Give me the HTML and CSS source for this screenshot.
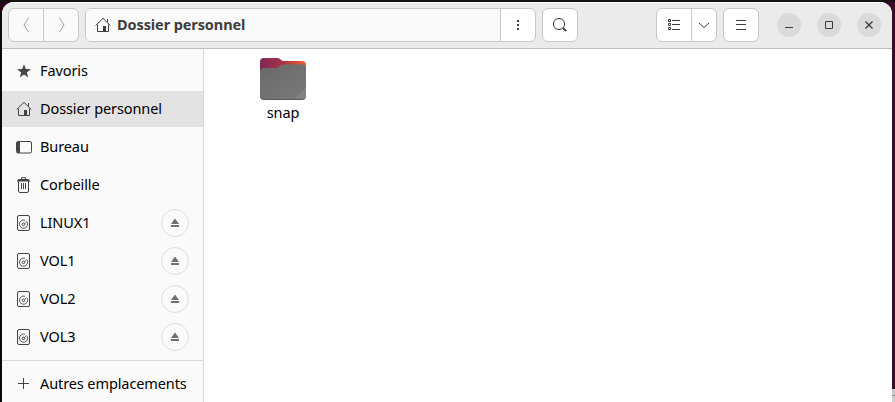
FILE: index.html
```html
<!DOCTYPE html>
<html lang="fr">
<head>
<meta charset="utf-8">
<title>Dossier personnel</title>
<link rel="stylesheet" href="styles.css">
</head>
<body>
<svg class="defs" width="0" height="0">
  <symbol id="home" viewBox="0 0 16 16"><path d="M.6 8.600 8 1.300l7.400 7.300M2.500 7.500v7h11v-7M12.500 2v3.300" fill="none" stroke="currentColor" stroke-width="1"/><path d="M8 9h3v5H8z" fill="currentColor" stroke="none"/></symbol>
  <symbol id="disk" viewBox="0 0 16 16"><g fill="none" stroke="currentColor"><rect x="1.500" y=".5" width="12" height="15" rx="1.500" stroke-width="1"/><path d="M11 6.900a4.100 4.100 0 1 1-2-1.600" stroke-width=".9"/><circle cx="7.500" cy="9.300" r="1.300" stroke-width="1"/><path d="m8.700 8.100 2-1.800" stroke-width=".7"/></g></symbol>
  <symbol id="eject" viewBox="0 0 10 10"><path d="M5 .5 9 6H1zM1 7h8v2H1z" fill="currentColor" stroke="none"/></symbol>
</svg>
<div class="window">
  <header class="toolbar">
    <div class="group nav">
      <button class="cell dim" aria-label="Précédent"><svg width="16" height="16" viewBox="0 0 16 16"><path d="M10.500 1 6 8l4.500 7"/></svg></button>
      <button class="cell dim" aria-label="Suivant"><svg width="16" height="16" viewBox="0 0 16 16"><path d="m6.500 1 4.500 7-4.500 7"/></svg></button>
    </div>
    <div class="group path">
      <div class="location"><svg width="16" height="16"><use href="#home"/></svg><span class="title">Dossier personnel</span></div>
      <button class="cell" aria-label="Options"><svg width="16" height="16" viewBox="0 0 16 16"><path class="solid" d="M7 3h2v2H7zM7 7h2v2H7zM7 11h2v2H7z"/></svg></button>
    </div>
    <button class="group search" aria-label="Rechercher"><svg width="16" height="16" viewBox="0 0 16 16"><circle cx="7" cy="7" r="5.600"/><path d="m11 11 3.200 3.200" stroke-width="1.800"/></svg></button>
    <div class="group view">
      <button class="cell" aria-label="Liste"><svg width="16" height="16" viewBox="0 0 16 16"><path d="M2.500 2.500h2v2h-2zM2.500 6.500h2v2h-2zM2.500 10.500h2v2h-2zM6 3.500h8M6 7.500h8M6 12.500h8"/></svg></button>
      <button class="cell arrow" aria-label="Affichage"><svg width="16" height="16" viewBox="0 0 16 16"><path d="m3 6 5 4.500L13 6"/></svg></button>
    </div>
    <button class="group menu" aria-label="Menu"><svg width="16" height="16" viewBox="0 0 16 16"><path d="M3 3.500h10M3 7.500h10M3 12.500h10"/></svg></button>
    <div class="controls">
      <button class="control" aria-label="Réduire"><svg width="16" height="16" viewBox="0 0 16 16"><path d="M4 10.500h8"/></svg></button>
      <button class="control" aria-label="Agrandir"><svg width="16" height="16" viewBox="0 0 16 16"><path d="M4.500 4.500h7v7h-7z"/></svg></button>
      <button class="control" aria-label="Fermer"><svg width="16" height="16" viewBox="0 0 16 16"><path d="m4.500 4.500 7 7m0-7-7 7" stroke-width="1.400"/></svg></button>
    </div>
  </header>
  <div class="content">
    <nav class="sidebar">
      <a class="row"><svg width="16" height="16" viewBox="0 0 16 16"><path class="solid" d="m8 1.200 1.800 4.900 5.100.1-4.100 3.200 1.500 5L8 11.500l-4.300 2.900 1.500-5L1.100 6.200l5.100-.1z"/></svg><span>Favoris</span></a>
      <a class="row selected"><svg width="16" height="16"><use href="#home"/></svg><span>Dossier personnel</span></a>
      <a class="row"><svg width="16" height="16" viewBox="0 0 16 16"><rect x=".5" y="2.500" width="15" height="11.500" rx="1.500"/><path class="solid" d="M1 3h3v11H1z"/></svg><span>Bureau</span></a>
      <a class="row"><svg width="16" height="16" viewBox="0 0 16 16"><path d="M2.500 4v10q0 1.500 1.500 1.500h7q1.500 0 1.500-1.500V4M5.500 6v6M7.500 6v6M9.500 6v6M5.500 2V.7h4V2"/><path class="solid" d="M1 4.500q0-2.500 2-2.500h9q2 0 2 2.500z"/></svg><span>Corbeille</span></a>
      <a class="row"><svg width="16" height="16"><use href="#disk"/></svg><span>LINUX1</span><button class="eject" aria-label="Éjecter"><svg width="10" height="10"><use href="#eject"/></svg></button></a>
      <a class="row"><svg width="16" height="16"><use href="#disk"/></svg><span>VOL1</span><button class="eject" aria-label="Éjecter"><svg width="10" height="10"><use href="#eject"/></svg></button></a>
      <a class="row"><svg width="16" height="16"><use href="#disk"/></svg><span>VOL2</span><button class="eject" aria-label="Éjecter"><svg width="10" height="10"><use href="#eject"/></svg></button></a>
      <a class="row"><svg width="16" height="16"><use href="#disk"/></svg><span>VOL3</span><button class="eject" aria-label="Éjecter"><svg width="10" height="10"><use href="#eject"/></svg></button></a>
      <a class="row other"><svg width="16" height="16" viewBox="0 0 16 16"><path d="M2 7.500h11M7.500 2v11"/></svg><span>Autres emplacements</span></a>
    </nav>
    <main class="files">
      <div class="file">
        <svg width="48" height="44" viewBox="0 0 48 44">
          <defs>
            <linearGradient id="back"><stop offset="0" stop-color="#7d2853"/><stop offset=".5" stop-color="#a83348"/><stop offset="1" stop-color="#eb6330"/></linearGradient>
            <linearGradient id="front" x2="1" y2="1"><stop offset="0" stop-color="#696969"/><stop offset="1" stop-color="#7a7a7a"/></linearGradient>
          </defs>
          <path fill="url(#back)" d="M1 17V5q0-4 4-4h13.500q1.500 0 2.500 1l1.500 1.300q1 .7 2 .7H43q4 0 4 4v10z"/>
          <path fill="#595959" d="M1 16q0-4 4-4h30l12 2v25q0 4-4 4H5q-4 0-4-4z"/>
          <path fill="url(#front)" d="M1 15q0-4 4-4h12q2 0 3-1l1.500-1.500Q22.700 7.500 24.500 7.500H43q4 0 4 4V38q0 4-4 4H5q-4 0-4-4z"/>
          <path fill="#828282" d="M35 42 47 31v7q0 4-4 4z"/>
        </svg>
        <span>snap</span>
      </div>
    </main>
  </div>
</div>
<div class="edge"></div>
</body>
</html>
```
FILE: styles.css
```css
* { box-sizing: border-box; }
body { margin: 0; width: 895px; height: 402px; overflow: hidden; padding: 2px 3px 0 2px; background: linear-gradient(to right, #260018 0 5px, transparent 5px) 0 2px / 895px 10px no-repeat, linear-gradient(#151311 0 2px, transparent 2px), linear-gradient(to right, #0d060b 2px, #3b0a2a 2px); font: 14.5px/20px "Noto Sans", sans-serif; letter-spacing: -.1px; color: #000; }
.defs { position: absolute; }
button { padding: 0; margin: 0; border: 0; background: none; font: inherit; color: inherit; }
svg { display: block; flex: none; fill: none; stroke: currentColor; stroke-width: 1; }
svg .solid, .file path { stroke: none; }
svg .solid { fill: currentColor; }
.window { height: 400px; border-radius: 12px 12px 0 0; overflow: hidden; background: #fff; }
.toolbar { height: 47px; display: flex; align-items: flex-start; padding: 6px 10px 0 6px; background: #ebebeb; border-bottom: 1px solid #bdbdbd; box-shadow: inset 0 1px #fafafa; color: #3d3d3d; }
.group { height: 34px; display: flex; align-items: center; justify-content: center; border: 1px solid #c8c8c8; border-radius: 6px; background: #fff; }
.cell { width: 35px; height: 32px; display: flex; align-items: center; justify-content: center; flex: none; }
.cell + .cell, .location + .cell { border-left: 1px solid #c8c8c8; }
.nav { width: 71px; background: #fafafa; }
.nav .cell { width: 34px; }
.nav .cell + .cell { width: 35px; }
.dim { color: #a0a0a0; }
.path { width: 451px; margin-left: 6px; overflow: hidden; }
.location { flex: 1; align-self: stretch; display: flex; align-items: center; gap: 6px; padding-left: 9px; background: #fafafa; }
.title { font-weight: 700; padding-bottom: 2px; }
.search { width: 36px; margin-left: 6px; }
.view { width: 61px; margin-left: 78px; }
.view .cell { width: 34px; }
.view .arrow { width: 25px; }
.menu { width: 36px; margin-left: 6px; }
.controls { display: flex; gap: 16px; margin: 5px 0 0 18px; }
.control { width: 24px; height: 24px; display: grid; place-items: center; border-radius: 50%; background: #dadada; }
.content { display: flex; height: 353px; }
.sidebar { width: 202px; flex: none; padding-top: 4px; background: #fafafa; border-right: 1px solid #d5d5d5; }
.row { height: 36px; margin-bottom: 2px; display: flex; align-items: center; gap: 8px; padding: 0 14px; white-space: nowrap; }
.row > svg { color: #444; }
.row > span { padding-bottom: 2px; }
.selected { background: #e3e3e3; }
.eject { width: 28px; height: 28px; margin-left: auto; border: 1px solid #dedede; border-radius: 50%; display: grid; place-items: center; color: #707070; }
.other { height: 47px; margin: 5px 0 0; border-top: 1px solid #d9d9d9; }
.files { flex: 1; padding: 8px 0 0 55px; }
.file { width: 48px; display: flex; flex-direction: column; align-items: center; gap: 1px; }
.edge { position: absolute; right: 0; bottom: 0; width: 3px; height: 13px; background: linear-gradient(#c9c9c9 6px, #929292 6px 7px, #d0d0d0 7px); }
```
